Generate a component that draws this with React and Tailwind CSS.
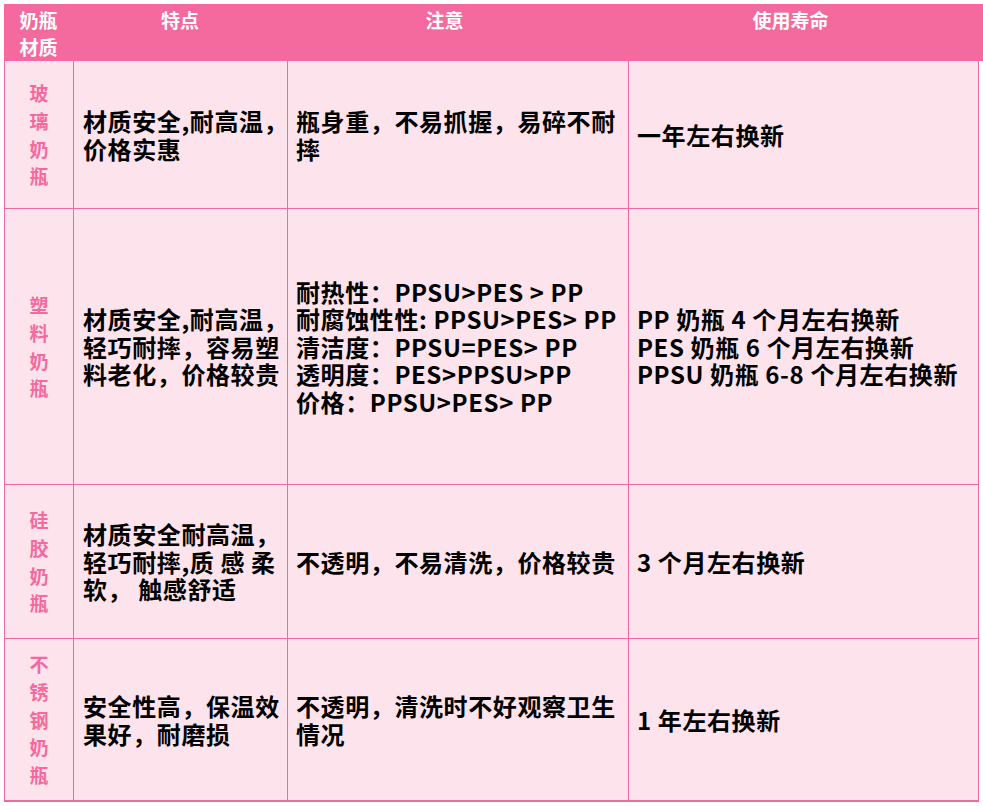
import React from "react";

const rows = [
  {
    name: ["玻", "璃", "奶", "瓶"],
    h: "h-[148px]",
    feature: ["材质安全,耐高温，", "价格实惠"],
    note: ["瓶身重，不易抓握，易碎不耐", "摔"],
    life: ["一年左右换新"],
  },
  {
    name: ["塑", "料", "奶", "瓶"],
    h: "h-[276px]",
    feature: ["材质安全,耐高温，", "轻巧耐摔，容易塑", "料老化，价格较贵"],
    note: [
      "耐热性：PPSU>PES > PP",
      "耐腐蚀性性: PPSU>PES> PP",
      "清洁度：PPSU=PES> PP",
      "透明度：PES>PPSU>PP",
      "价格：PPSU>PES> PP",
    ],
    life: ["PP 奶瓶 4 个月左右换新", "PES 奶瓶 6 个月左右换新", "PPSU 奶瓶 6-8 个月左右换新"],
  },
  {
    name: ["硅", "胶", "奶", "瓶"],
    h: "h-[154px]",
    feature: ["材质安全耐高温，", "轻巧耐摔,质 感 柔", "软， 触感舒适"],
    note: ["不透明，不易清洗，价格较贵"],
    life: ["3 个月左右换新"],
  },
  {
    name: ["不", "锈", "钢", "奶", "瓶"],
    h: "h-[163px]",
    feature: ["安全性高，保温效", "果好，耐磨损"],
    note: ["不透明，清洗时不好观察卫生", "情况"],
    life: ["1 年左右换新"],
  },
];

function Lines({ lines }) {
  return (
    <div className="text-[24px] leading-[27.5px] tracking-[0.6px] font-bold text-black whitespace-pre">
      {lines.map((l, i) => (
        <div key={i}>{l}</div>
      ))}
    </div>
  );
}

export default function App() {
  return (
    <div
      className="w-[983px] h-[806px] bg-white pt-[4px] pl-[4px] overflow-hidden"
      style={{ fontFamily: '"Noto Sans CJK SC", "Noto Sans", sans-serif' }}
    >
      {/* header */}
      <div className="flex h-[57px] w-[979px] bg-[#f56a9e] text-white font-bold text-[19px] leading-[27px]">
        <div className="w-[69px] pt-[2px] text-center">
          <div>奶瓶</div>
          <div>材质</div>
        </div>
        <div className="w-[214px] pt-[2px] text-center">特点</div>
        <div className="w-[341px] pt-[2px] pr-[26px] text-center">注意</div>
        <div className="flex-1 pt-[2px] pr-[30px] text-center">使用寿命</div>
      </div>

      {/* body */}
      <div className="grid grid-cols-[69px_214px_341px_350px] w-[975px] bg-[#fde3ec] border-l border-[#ef6a9e]">
        {rows.map((r, idx) => {
          const last = idx === rows.length - 1;
          const cell = `${r.h} border-r border-[#ef6a9e] ${last ? "border-b-2" : "border-b"}`;
          return (
            <React.Fragment key={idx}>
              <div className={`${cell} flex flex-col items-center justify-center text-[19px] leading-[27.7px] font-bold text-[#f46a9d]`}>
                {r.name.map((c) => (
                  <div key={c}>{c}</div>
                ))}
              </div>
              <div className={`${cell} flex items-center pl-[9px]`}>
                <Lines lines={r.feature} />
              </div>
              <div className={`${cell} flex items-center pl-[8px]`}>
                <Lines lines={r.note} />
              </div>
              <div className={`${cell} flex items-center pl-[8px]`}>
                <Lines lines={r.life} />
              </div>
            </React.Fragment>
          );
        })}
      </div>
    </div>
  );
}
